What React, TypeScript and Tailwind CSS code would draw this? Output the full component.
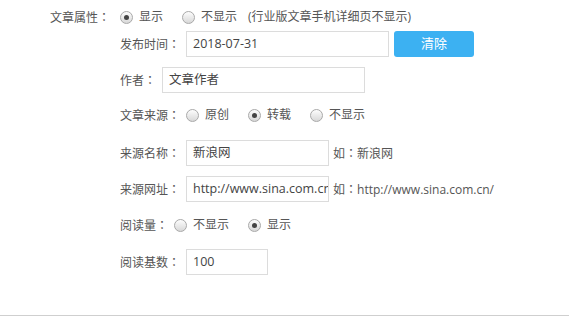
import React from "react";

// full-width colon centred in its box, as in the reference
function C() {
  return <span style={{ fontFamily: '"Noto Sans CJK TC", sans-serif' }}>：</span>;
}

function Radio({ checked, label, last }: { checked?: boolean; label: string; last?: boolean }) {
  return (
    <label className={`flex items-center ${last ? "" : "mr-[19px]"}`}>
      <span className="w-[13px] h-[13px] rounded-full border border-[#a9a9a9] bg-gradient-to-b from-[#fdfdfd] to-[#d8d8d8] flex items-center justify-center mr-[6px]">
        {checked && <span className="w-[5px] h-[5px] rounded-full bg-[#444]" />}
      </span>
      <span>{label}</span>
    </label>
  );
}

function Field({ value, w }: { value: string; w: string }) {
  return (
    <div className={`${w} h-[26px] border border-[#dcdcdc] flex items-center pl-[6px] overflow-hidden whitespace-nowrap text-[#444] text-[12.5px]`}>
      <span className="whitespace-nowrap">{value}</span>
    </div>
  );
}

export default function App() {
  return (
    <div
      className="w-[569px] h-[320px] bg-white text-[12px] text-[#555]"
      style={{ fontFamily: '"Open Sans", "Noto Sans CJK SC", sans-serif' }}
    >
      <div className="h-[316px] border-b border-[#cfcfcf] pt-[7px]">
        <div className="flex items-center h-[20px]">
          <div className="w-[110px] text-right">文章属性<C /></div>
          <div className="flex items-center ml-[10px]">
            <Radio checked label="显示" />
            <Radio label="不显示" last />
            <span className="ml-[11px]">(行业版文章手机详细页不显示)</span>
          </div>
        </div>

        <div className="pl-[120px]">
          <div className="flex items-center mt-[4px]">
            <span className="w-[66px]">发布时间<C /></span>
            <Field value="2018-07-31" w="w-[203px]" />
            <button className="ml-[5px] w-[80px] h-[26px] rounded-[3px] bg-[#3cb1f2] text-white text-[13px]">
              清除
            </button>
          </div>

          <div className="flex items-center mt-[10px]">
            <span className="w-[42px]">作者<C /></span>
            <Field value="文章作者" w="w-[203px]" />
          </div>

          <div className="flex items-center h-[20px] mt-[12px]">
            <span className="w-[66px]">文章来源<C /></span>
            <Radio label="原创" />
            <Radio checked label="转载" />
            <Radio label="不显示" last />
          </div>

          <div className="flex items-center mt-[15px]">
            <span className="w-[66px]">来源名称<C /></span>
            <Field value="新浪网" w="w-[143px]" />
            <span className="ml-[4px]">如<C />新浪网</span>
          </div>

          <div className="flex items-center mt-[10px]">
            <span className="w-[66px]">来源网址<C /></span>
            <Field value="http://www.sina.com.cn/" w="w-[143px]" />
            <span className="ml-[4px]">如<C />http://www.sina.com.cn/</span>
          </div>

          <div className="flex items-center h-[20px] mt-[13px]">
            <span className="w-[54px]">阅读量<C /></span>
            <Radio label="不显示" />
            <Radio checked label="显示" last />
          </div>

          <div className="flex items-center mt-[14px]">
            <span className="w-[66px]">阅读基数<C /></span>
            <Field value="100" w="w-[82px]" />
          </div>
        </div>
      </div>
    </div>
  );
}
